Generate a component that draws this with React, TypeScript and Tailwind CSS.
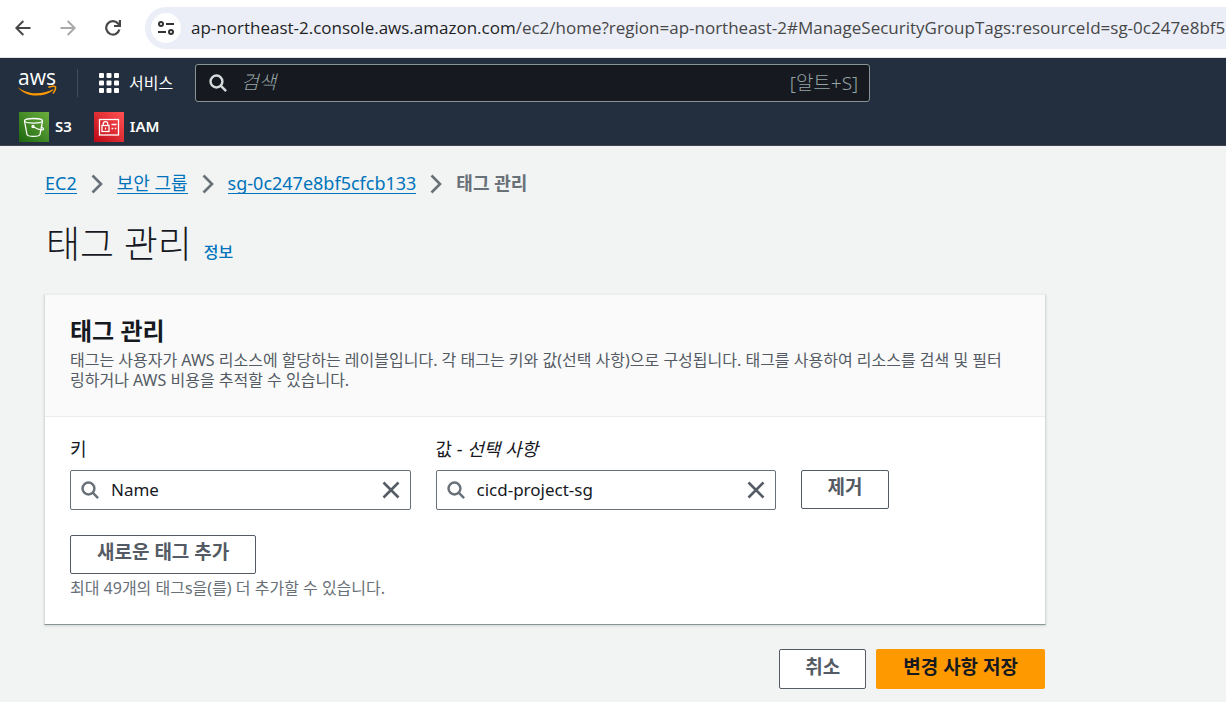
import { useState } from 'react';

interface TagFieldProps {
  id: string;
  value: string;
  onChange: (value: string) => void;
}

function SearchIcon({ className }: { className: string }) {
  return (
    <svg viewBox="0 0 20 20" fill="none" stroke="currentColor" strokeWidth="2.700" className={className}>
      <circle cx="8.300" cy="8.300" r="6.600" />
      <path d="M13 13l6 6" />
    </svg>
  );
}

function AwsLogo() {
  return (
    <a href="#home" aria-label="AWS" className="flex w-10 flex-col items-center pb-[2px] text-white">
      <span className="font-['Open_Sans',sans-serif] text-[21px] leading-4 font-medium">aws</span>
      <svg viewBox="0 0 40 11" fill="none" className="h-[11px] w-10">
        <path d="M.5 2C4 4.800 11 8.300 19 8.300C26 8.300 32 6.500 36 4.300L36.600 5C32 8.800 26 10.600 19.500 10.600C11 10.600 4.500 7 .5 2Z" fill="#ff9900" />
        <path d="M31.300 2.300C34.500 1.200 37.500 1 38.400 1.800C39 3.200 37.800 6.500 35.800 8.500" stroke="#ff9900" strokeWidth="1.500" />
      </svg>
    </a>
  );
}

function S3Icon() {
  return (
    <svg viewBox="0 0 30 30" className="size-[30px]">
      <defs>
        <linearGradient id="s3-bg" x1="0" y1="1" x2="1" y2="0">
          <stop offset="0" stopColor="#1b660f" />
          <stop offset="1" stopColor="#6cae3e" />
        </linearGradient>
      </defs>
      <rect width="30" height="30" fill="url(#s3-bg)" />
      <g fill="none" stroke="#fff" strokeWidth="1.300">
        <ellipse cx="14.500" cy="8.800" rx="9" ry="2.300" />
        <path d="M5.500 9L8 22.500c.5 2.600 12.500 2.600 13 0L23.500 9" />
        <path d="M14.500 14.800c4 2.600 9.700 4.200 10 2.400.1-.8-1.200-1.700-2.400-2.400" />
        <circle cx="14" cy="14.500" r="1" />
      </g>
    </svg>
  );
}

function IamIcon() {
  return (
    <svg viewBox="0 0 30 30" className="size-[30px]">
      <defs>
        <linearGradient id="iam-bg" x1="0" y1="1" x2="1" y2="0">
          <stop offset="0" stopColor="#bd0816" />
          <stop offset="1" stopColor="#ff5252" />
        </linearGradient>
      </defs>
      <rect width="30" height="30" fill="url(#iam-bg)" />
      <g fill="none" stroke="#fff" strokeWidth="1.300">
        <rect x="5.500" y="7.500" width="19" height="15.500" />
        <rect x="8" y="13.500" width="7" height="6" />
        <path d="M9.200 13.500v-1.500a2.300 2.300 0 0 1 4.600 0v1.500M11.500 15.500v2M17.500 12.500h5M17.500 16.500h1.800M20.800 16.500h1.500" />
      </g>
    </svg>
  );
}

function Chevron() {
  return (
    <svg viewBox="0 0 12 20" fill="none" stroke="#687078" strokeWidth="2.600" className="mx-[14px] mt-[2px] h-5 w-3">
      <path d="M1.500 1.500L10 10l-8.500 8.500" />
    </svg>
  );
}

function BrowserBar() {
  return (
    <div className="flex h-[58px] items-center border-b border-[#dfe1e5] bg-white pb-[2px] text-[#474747]">
      <div className="flex shrink-0 items-center gap-[29px] pr-6 pl-[15px]">
        <button aria-label="뒤로">
          <svg viewBox="0 0 16 16" fill="none" stroke="currentColor" strokeWidth="2" className="size-4">
            <path d="M15.500 8H1.500M8.300 1L1.300 8l7 7" />
          </svg>
        </button>
        <button aria-label="앞으로" className="text-[#a9a9a9]">
          <svg viewBox="0 0 16 16" fill="none" stroke="currentColor" strokeWidth="2" className="size-4">
            <path d="M.5 8h14M7.700 1l7 7-7 7" />
          </svg>
        </button>
        <button aria-label="새로고침">
          <svg viewBox="0 0 16 16" fill="none" stroke="currentColor" strokeWidth="2.200" className="size-4">
            <path d="M14.400 9.500A6.700 6.700 0 1 1 13 3.500L14.500 5M14.900 0v6H9" />
          </svg>
        </button>
      </div>
      <div className="flex h-[42px] min-w-0 flex-1 items-center gap-[10px] rounded-l-full bg-[#ebeef7] pl-[6px]">
        <button aria-label="사이트 정보" className="flex size-[30px] shrink-0 items-center justify-center rounded-full bg-white">
          <svg viewBox="0 0 16 14" fill="none" stroke="#333" strokeWidth="2" className="h-[14px] w-4">
            <circle cx="3" cy="3" r="2" />
            <path d="M8 3h8M0 11h8" />
            <circle cx="13" cy="11" r="2" />
          </svg>
        </button>
        <span className="pt-px font-['Open_Sans',sans-serif] text-[17px] leading-6 whitespace-nowrap">
          <span className="text-[#1f1f1f]">ap-northeast-2.console.aws.amazon.com</span>
          /ec2/home?region=ap-northeast-2#ManageSecurityGroupTags:resourceId=sg-0c247e8bf5
        </span>
      </div>
    </div>
  );
}

function ConsoleHeader() {
  return (
    <header className="h-[88px] border-b border-[#414750] bg-[#232f3e] text-white">
      <div className="flex h-[50px] items-center pl-[17px]">
        <AwsLogo />
        <div className="mr-[21px] ml-5 h-7 w-px bg-[#414d5c]" />
        <button className="flex shrink-0 items-center gap-[10px] text-[16px]">
          <svg viewBox="0 0 20 20" fill="currentColor" className="size-5">
            {[0, 7.5, 15].map((y) =>
              [0, 7.5, 15].map((x) => <rect key={`${x}-${y}`} x={x} y={y} width="5" height="5" rx="1" />)
            )}
          </svg>
          서비스
        </button>
        <label className="ml-[22px] flex h-[38px] w-[675px] items-center rounded-[3px] border border-[#879596] bg-[#16191f] pr-[11px] pl-3">
          <SearchIcon className="ml-px size-[18px] shrink-0 text-[#d5dbdb]" />
          <input
            type="search"
            aria-label="검색"
            placeholder="검색"
            className="ml-[14px] min-w-0 flex-1 bg-transparent pb-[2px] text-[19px] font-light outline-none placeholder:text-[#95a5a6] placeholder:italic"
          />
          <span className="text-[19px] font-light text-[#95a5a6]">[알트+S]</span>
        </label>
      </div>
      <nav className="flex items-center gap-[22px] pt-1 pl-[19px] text-[15px] font-semibold">
        <a href="#s3" className="flex items-center gap-[6px]">
          <S3Icon />
          <span className="pb-[2px]">S3</span>
        </a>
        <a href="#iam" className="flex items-center gap-[6px]">
          <IamIcon />
          <span className="pb-[2px]">IAM</span>
        </a>
      </nav>
    </header>
  );
}

function TagField({ id, value, onChange }: TagFieldProps) {
  return (
    <div className="flex h-10 items-center rounded-[2px] border border-[#687078] bg-white px-[10px]">
      <SearchIcon className="size-[18px] shrink-0 text-[#687078]" />
      <input
        id={id}
        type="text"
        value={value}
        onChange={(e) => onChange(e.target.value)}
        className="ml-3 min-w-0 flex-1 bg-transparent text-[17px] leading-6 outline-none"
      />
      <button aria-label="지우기" onClick={() => onChange('')} className="text-[#545b64]">
        <svg viewBox="0 0 18 18" fill="none" stroke="currentColor" strokeWidth="2.600" className="size-[18px]">
          <path d="M1.500 1.500l15 15M16.500 1.500l-15 15" />
        </svg>
      </button>
    </div>
  );
}

export default function App() {
  const [tagKey, setTagKey] = useState('Name');
  const [tagValue, setTagValue] = useState('cicd-project-sg');

  return (
    <div className="min-h-screen bg-[#f2f3f3] font-['Noto_Sans','Noto_Sans_CJK_KR',sans-serif] text-[#16191f]">
      <BrowserBar />
      <ConsoleHeader />

      <main className="max-w-[1090px] px-[44px] pt-6 pb-3">
        {/* Breadcrumbs */}
        <nav className="flex h-[26px] items-center pl-px text-[18px] leading-5 text-[#0073bb]">
          <a href="#ec2" className="border-b border-current">EC2</a>
          <Chevron />
          <a href="#groups" className="border-b border-current">보안 그룹</a>
          <Chevron />
          <a href="#group" className="border-b border-current">sg-0c247e8bf5cfcb133</a>
          <Chevron />
          <span className="font-bold text-[#687078]">태그 관리</span>
        </nav>

        <div className="mt-[23px] flex items-baseline gap-3 pl-[2px]">
          <h1 className="text-[37px] leading-[50px] font-light">태그 관리</h1>
          <a href="#info" className="text-[16px] font-medium text-[#0073bb]">정보</a>
        </div>

        <section className="mt-[25px] border border-x-[#d5dbdb] border-t-[#eaeded] border-b-[#879596] bg-white shadow-sm">
          <div className="border-b border-[#eaeded] bg-[#fafafa] pt-[19px] pr-8 pb-[26px] pl-[25px]">
            <h2 className="mb-[2px] text-[24px] leading-[34px] font-bold">태그 관리</h2>
            <p className="text-[16px] leading-5 text-[#545b64]">
              태그는 사용자가 AWS 리소스에 할당하는 레이블입니다. 각 태그는 키와 값(선택 사항)으로 구성됩니다. 태그를 사용하여 리소스를 검색 및 필터링하거나 AWS 비용을 추적할 수 있습니다.
            </p>
          </div>

          <div className="px-[25px] pt-5 pb-[26px]">
            <div className="grid grid-cols-[14fr_14fr_9fr] gap-[25px]">
              <div>
                <label htmlFor="tag-key" className="mb-[9px] block text-[18px] leading-6">키</label>
                <TagField id="tag-key" value={tagKey} onChange={setTagKey} />
              </div>
              <div>
                <label htmlFor="tag-value" className="mb-[9px] block text-[18px] leading-6">
                  값 - <i>선택 사항</i>
                </label>
                <TagField id="tag-value" value={tagValue} onChange={setTagValue} />
              </div>
              <button className="mt-[33px] h-[39px] w-[88px] rounded-[2px] border border-[#545b64] bg-white pb-1 text-[19px] font-bold text-[#545b64]">
                제거
              </button>
            </div>

            <button className="mt-[25px] h-[39px] rounded-[2px] border border-[#545b64] bg-white px-[26px] pb-1 text-[19px] font-bold text-[#545b64]">
              새로운 태그 추가
            </button>
            <p className="mt-1 text-[16px] leading-5 text-[#687078]">최대 49개의 태그s을(를) 더 추가할 수 있습니다.</p>
          </div>
        </section>

        {/* Form actions */}
        <div className="mt-6 flex justify-end gap-[10px] pr-px">
          <button className="h-10 rounded-[2px] border border-[#545b64] bg-white px-[25px] pb-1 text-[19px] font-bold text-[#545b64]">
            취소
          </button>
          <button className="h-10 rounded-[2px] bg-[#ff9900] px-[27px] pb-1 text-[19px] font-bold">변경 사항 저장</button>
        </div>
      </main>
    </div>
  );
}
